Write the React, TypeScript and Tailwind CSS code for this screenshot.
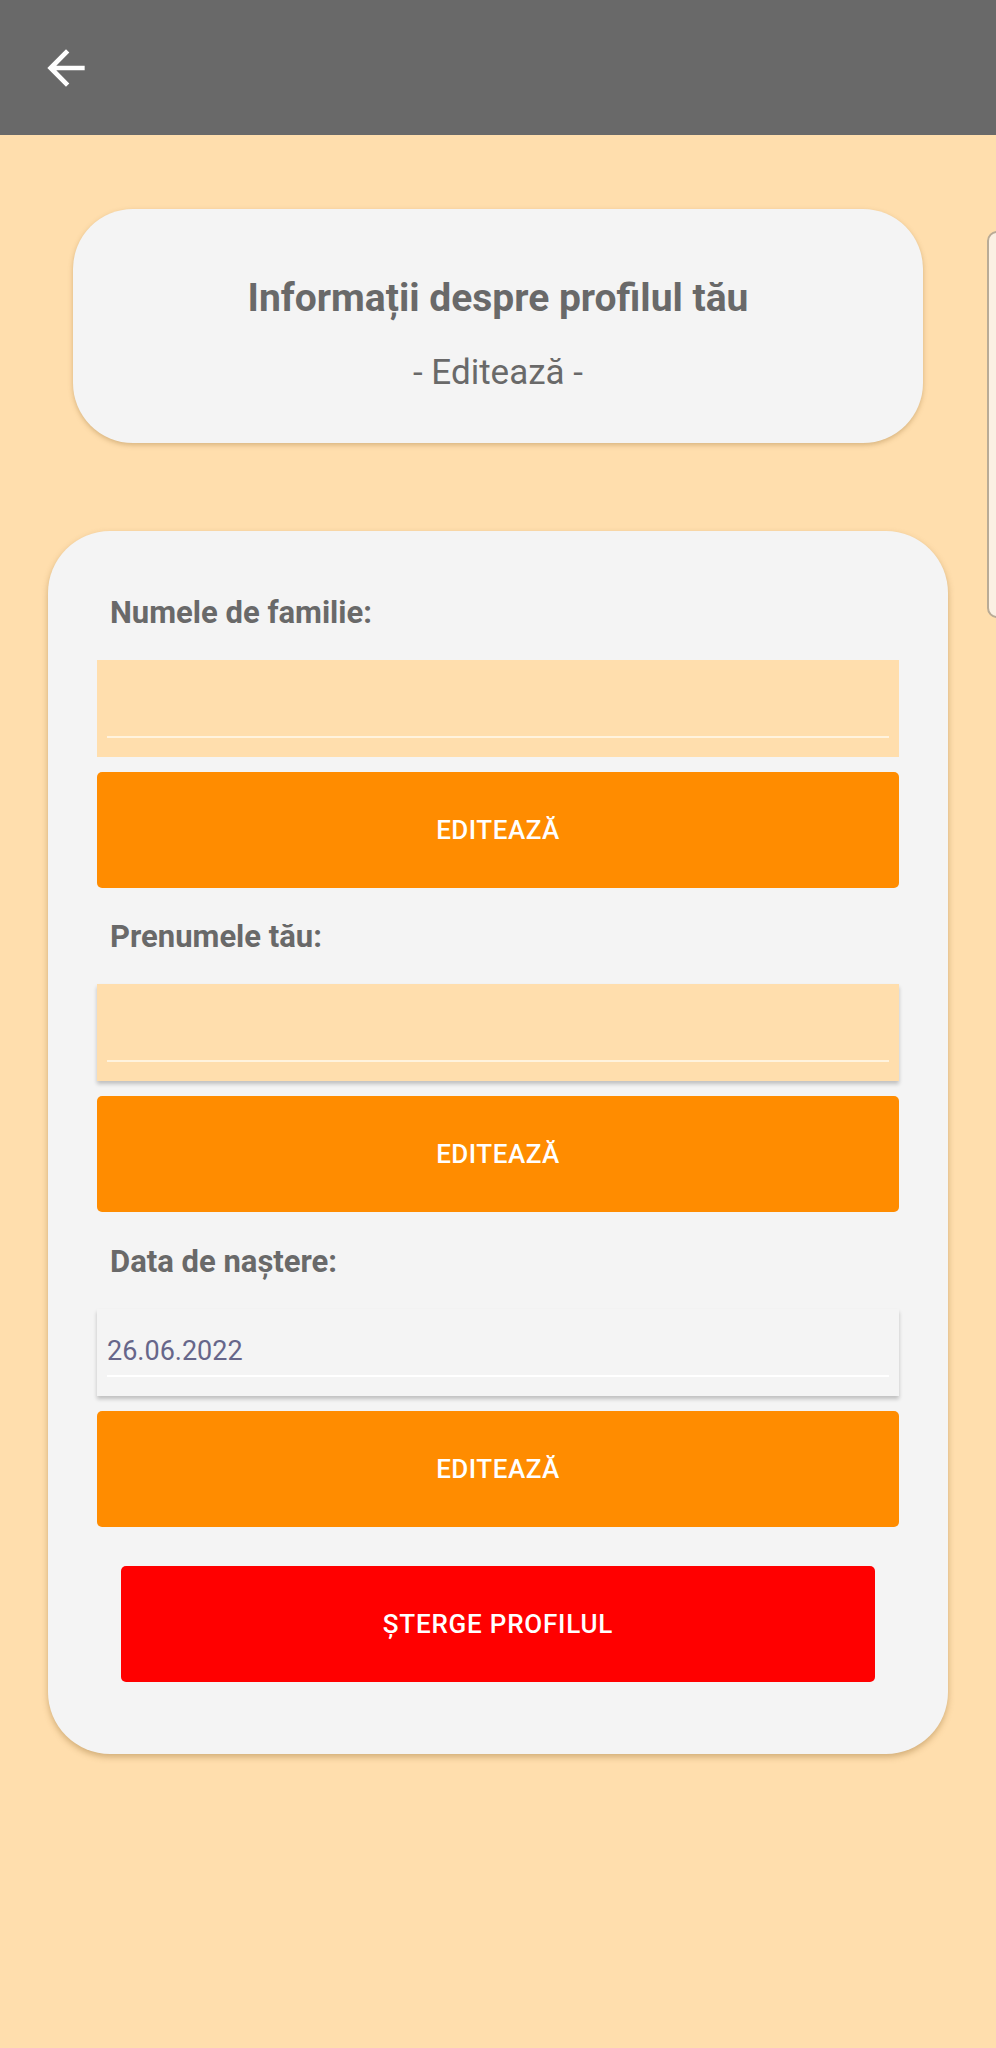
const font = { fontFamily: "Roboto, 'Noto Sans', sans-serif" };

function Field({
  label,
  value,
  tone,
  shadow,
}: {
  label: string;
  value?: string;
  tone: "peach" | "gray";
  shadow?: boolean;
}) {
  return (
    <div className="flex flex-col">
      <div className="pl-[13px] text-[31px] font-bold leading-[36px] text-[#696969]">
        {label}
      </div>
      <div
        className={
          "mt-[29px] flex flex-col justify-end px-[10px] pb-[19px] " +
          (tone === "peach" ? "h-[97px] bg-[#ffdead]" : "h-[87px] bg-[#f4f4f4]") +
          (shadow ? " shadow-[0_3px_4px_rgba(0,0,0,0.22)]" : "")
        }
      >
        {value && (
          <div className="pb-[8px] text-[27px] leading-[32px] text-[#66668a]">{value}</div>
        )}
        <div
          className={
            "h-[2px] " + (tone === "peach" ? "bg-[#fff3de]" : "bg-[#ffffff]")
          }
        />
      </div>
      <button className="mt-[15px] h-[116px] rounded-[5px] bg-[#ff8c00] text-[26px] font-medium tracking-[0.02em] text-white">
        EDITEAZĂ
      </button>
    </div>
  );
}

export default function App() {
  return (
    <div className="relative min-h-[2048px] w-full overflow-hidden bg-[#ffdead]" style={font}>
      <header className="flex h-[135px] items-center bg-[#696969] pl-[38px]">
        <svg width="56" height="56" viewBox="0 0 24 24" fill="#ffffff">
          <path d="M20 11H7.83l5.59-5.59L12 4l-8 8 8 8 1.41-1.41L7.83 13H20v-2z" />
        </svg>
      </header>

      <div className="absolute left-[987px] top-[231px] h-[387px] w-[40px] rounded-[10px] border-2 border-[#b9ab96] bg-[#fbf0e3]" />

      <section className="mx-[73px] mt-[74px] flex h-[234px] flex-col items-center rounded-[60px] bg-[#f4f4f4] pt-[67px] shadow-[0_2px_5px_rgba(140,100,40,0.35)]">
        <h1 className="text-[39px] font-bold leading-[44px] text-[#696969]">
          Informații despre profilul tău
        </h1>
        <p className="mt-[33px] text-[35px] leading-[40px] text-[#696969]">- Editează -</p>
      </section>

      <section className="ml-[48px] mr-[48px] mt-[88px] flex flex-col rounded-[62px] bg-[#f4f4f4] px-[49px] pb-[72px] pt-[64px] shadow-[0_3px_6px_rgba(140,100,40,0.4)]">
        <Field label="Numele de familie:" tone="peach" />
        <div className="mt-[31px]">
          <Field label="Prenumele tău:" tone="peach" shadow />
        </div>
        <div className="mt-[32px]">
          <Field label="Data de naștere:" tone="gray" value="26.06.2022" shadow />
        </div>
        <button className="mx-[24px] mt-[39px] h-[116px] rounded-[5px] bg-[#ff0000] text-[26px] font-medium tracking-[0.03em] text-white">
          ȘTERGE PROFILUL
        </button>
      </section>
    </div>
  );
}
